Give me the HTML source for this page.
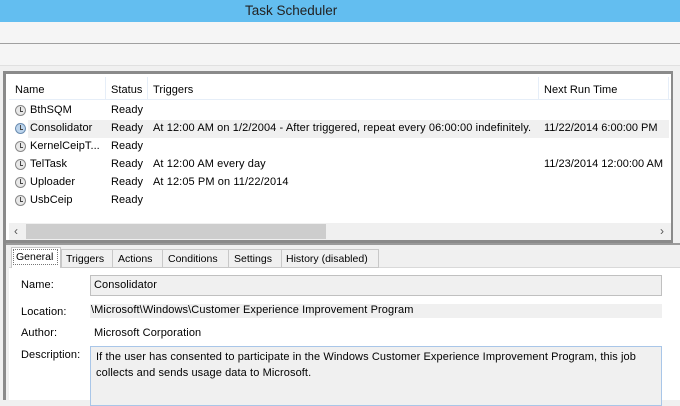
<!DOCTYPE html>
<html><head><style>
*{margin:0;padding:0;box-sizing:border-box}
body{width:680px;height:400px;overflow:hidden;background:#f0f0f0;font-family:"Liberation Sans",sans-serif;font-size:11px;color:#000;position:relative}
.a{position:absolute;white-space:nowrap}
.title{left:0;top:0;width:680px;height:22px;background:#63bef0;}
.t{font-size:13.5px;color:#222;left:245px;top:3px}
.clk{display:inline-block;width:11px;height:11px;border-radius:50%;background:#e8e8e8;border:1px solid #888;position:absolute;left:15px}
.clk:after{content:"";position:absolute;left:4px;top:1px;width:2px;height:4px;border-left:1px solid #444;border-bottom:1px solid #444}
.n{font-size:11px;letter-spacing:0.05px}
.s{font-size:11px;letter-spacing:0.1px}
</style></head><body>
<div class="a title"></div>
<div class="a t">Task Scheduler</div>
<div class="a" style="left:0;top:22px;width:680px;height:21px;background:#f5f5f5"></div>
<div class="a" style="left:0;top:43px;width:680px;height:1px;background:#a0a0a0"></div>
<div class="a" style="left:0;top:44px;width:680px;height:21px;background:#f5f5f5"></div>
<div class="a" style="left:0;top:65px;width:680px;height:1px;background:#e0e0e0"></div>
<div class="a" style="left:3px;top:71px;width:670px;height:172px;border:3px solid #8a8a8a;border-right-width:2px;background:#fff"></div>
<div class="a" style="left:9px;top:77px;width:662px;height:23px;background:#fff;border-bottom:1px solid #e6eef8"></div>
<div class="a" style="left:105px;top:77px;width:1px;height:23px;background:#e6eef8"></div>
<div class="a" style="left:147px;top:77px;width:1px;height:23px;background:#e6eef8"></div>
<div class="a" style="left:538px;top:77px;width:1px;height:23px;background:#e6eef8"></div>
<div class="a" style="left:668px;top:77px;width:1px;height:23px;background:#e6eef8"></div>
<div class="a n" style="left:15px;top:84px">Name</div>
<div class="a n" style="left:111px;top:84px">Status</div>
<div class="a n" style="left:153px;top:84px">Triggers</div>
<div class="a n" style="left:544px;top:84px">Next Run Time</div>
<div class="a" style="left:28px;top:120px;width:641px;height:18px;background:#f0f0f0"></div>
<div class="clk" style="top:105px"></div><div class="a n" style="left:30px;top:104px">BthSQM</div><div class="a n" style="left:111px;top:104px">Ready</div>
<div class="clk" style="top:123px;background:#bcd4ec;border-color:#6a8cb0"></div><div class="a n" style="left:30px;top:122px">Consolidator</div><div class="a n" style="left:111px;top:122px">Ready</div><div class="a n" style="left:153px;top:122px;letter-spacing:0.1px">At 12:00 AM on 1/2/2004 - After triggered, repeat every 06:00:00 indefinitely.</div><div class="a n" style="left:544px;top:122px;letter-spacing:0">11/22/2014 6:00:00 PM</div>
<div class="clk" style="top:141px"></div><div class="a n" style="left:30px;top:140px">KernelCeipT...</div><div class="a n" style="left:111px;top:140px">Ready</div>
<div class="clk" style="top:159px"></div><div class="a n" style="left:30px;top:158px">TelTask</div><div class="a n" style="left:111px;top:158px">Ready</div><div class="a n" style="left:153px;top:158px;letter-spacing:0.1px">At 12:00 AM every day</div><div class="a n" style="left:544px;top:158px;letter-spacing:0">11/23/2014 12:00:00 AM</div>
<div class="clk" style="top:177px"></div><div class="a n" style="left:30px;top:176px">Uploader</div><div class="a n" style="left:111px;top:176px">Ready</div><div class="a n" style="left:153px;top:176px;letter-spacing:0.1px">At 12:05 PM on 11/22/2014</div>
<div class="clk" style="top:195px"></div><div class="a n" style="left:30px;top:194px">UsbCeip</div><div class="a n" style="left:111px;top:194px">Ready</div>
<div class="a" style="left:9px;top:223px;width:662px;height:17px;background:#f0f0f0"></div>
<div class="a" style="left:26px;top:224px;width:300px;height:15px;background:#cdcdcd"></div>
<div class="a" style="left:14px;top:224px;color:#555;font-size:12px">&lsaquo;</div>
<div class="a" style="left:660px;top:224px;color:#555;font-size:12px">&rsaquo;</div>
<div class="a" style="left:3px;top:243px;width:3px;height:157px;background:#8a8a8a"></div>
<div class="a" style="left:6px;top:243px;width:674px;height:2px;background:#9a9a9a"></div>
<div class="a" style="left:9px;top:267px;width:671px;height:133px;background:#fff;border-top:1px solid #d9d9d9"></div>
<div class="a" style="left:61px;top:249px;width:318px;height:19px;border:1px solid #c8c8c8;background:#f0f0f0"></div>
<div class="a" style="left:112px;top:249px;width:1px;height:19px;background:#c8c8c8"></div>
<div class="a" style="left:162px;top:249px;width:1px;height:19px;background:#c8c8c8"></div>
<div class="a" style="left:228px;top:249px;width:1px;height:19px;background:#c8c8c8"></div>
<div class="a" style="left:281px;top:249px;width:1px;height:19px;background:#c8c8c8"></div>
<div class="a" style="left:11px;top:247px;width:50px;height:21px;border:1px solid #c8c8c8;border-bottom:none;background:#fff"></div>
<div class="a" style="left:13px;top:249px;width:45px;height:16px;border:1px dotted #777"></div>
<div class="a" style="left:16px;top:251px;font-size:10.5px">General</div>
<div class="a" style="left:66px;top:253px;font-size:10.5px">Triggers</div>
<div class="a" style="left:118px;top:253px;font-size:10.5px">Actions</div>
<div class="a" style="left:168px;top:253px;font-size:10.5px">Conditions</div>
<div class="a" style="left:234px;top:253px;font-size:10.5px">Settings</div>
<div class="a" style="left:286px;top:253px;font-size:10.5px">History (disabled)</div>
<div class="a s" style="left:21px;top:279px">Name:</div>
<div class="a" style="left:90px;top:275px;width:572px;height:21px;border:1px solid #c0c0c0;background:#f0f0f0"></div>
<div class="a s" style="left:94px;top:279px">Consolidator</div>
<div class="a s" style="left:21px;top:306px">Location:</div>
<div class="a" style="left:90px;top:304px;width:572px;height:14px;background:#f0f0f0"></div>
<div class="a s" style="left:91px;top:304px">\Microsoft\Windows\Customer Experience Improvement Program</div>
<div class="a s" style="left:21px;top:327px">Author:</div>
<div class="a s" style="left:94px;top:327px">Microsoft Corporation</div>
<div class="a s" style="left:21px;top:349px">Description:</div>
<div class="a" style="left:90px;top:346px;width:572px;height:60px;border:1px solid #a9c6e8;background:#f0f0f0"></div>
<div class="a s" style="left:96px;top:349px;line-height:16px">If the user has consented to participate in the Windows Customer Experience Improvement Program, this job<br>collects and sends usage data to Microsoft.</div>
</body></html>
